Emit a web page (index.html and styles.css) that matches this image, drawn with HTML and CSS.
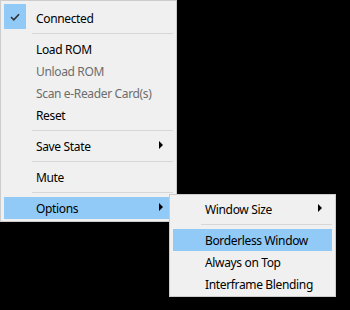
FILE: index.html
```html
<!DOCTYPE html>
<html lang="en">
<head>
  <meta charset="UTF-8">
  <title>Context Menu</title>
  <link rel="stylesheet" href="styles.css">
</head>
<body>
  <div class="menu main-menu">
    <div class="item checked">
      <span class="check">
        <svg width="10" height="8" viewBox="0 0 10 8"><path d="M1 4 L3.8 6.8 L9 1.2" fill="none" stroke="#333" stroke-width="1.6"/></svg>
      </span>
      <span class="label">Connected</span>
    </div>
    <div class="sep"></div>
    <div class="item"><span class="label">Load ROM</span></div>
    <div class="item disabled"><span class="label">Unload ROM</span></div>
    <div class="item disabled"><span class="label">Scan e-Reader Card(s)</span></div>
    <div class="item"><span class="label">Reset</span></div>
    <div class="sep"></div>
    <div class="item"><span class="label">Save State</span><span class="arrow"></span></div>
    <div class="sep"></div>
    <div class="item"><span class="label">Mute</span></div>
    <div class="sep"></div>
    <div class="item active"><span class="label">Options</span><span class="arrow"></span></div>
  </div>

  <div class="menu sub-menu">
    <div class="item"><span class="label">Window Size</span><span class="arrow"></span></div>
    <div class="sep"></div>
    <div class="item active"><span class="label">Borderless Window</span></div>
    <div class="item"><span class="label">Always on Top</span></div>
    <div class="item"><span class="label">Interframe Blending</span></div>
  </div>
</body>
</html>
```

FILE: styles.css
```css
body {
  background: #000;
  margin: 0;
  font-family: 'Segoe UI', 'Noto Sans', sans-serif;
  font-size: 12px;
  color: #000;
}

.menu {
  background: #f0f0f0;
  border: 1px solid #cccccc;
  box-sizing: border-box;
}

.main-menu {
  width: 177px;
  padding: 3px 3px 2px 3px;
}

.sub-menu {
  position: absolute;
  left: 169px;
  top: 194px;
  width: 167px;
  padding: 3px 3px 1px 3px;
}

.item {
  display: flex;
  align-items: center;
  height: 22px;
  padding-left: 32px;
  padding-right: 10px;
  position: relative;
}

.item .label {
  flex: 1;
  letter-spacing: -0.35px;
  padding-top: 1px;
}

.item.checked {
  height: 25px;
}

.item.checked .label {
  padding-top: 3px;
}

.check {
  position: absolute;
  left: 0;
  top: 0;
  width: 22px;
  height: 25px;
  background: #91c9f7;
  display: flex;
  align-items: center;
  justify-content: center;
}

.item.active {
  background: #91c9f7;
}

.item.disabled {
  color: #6d6d6d;
}

.arrow {
  width: 0;
  height: 0;
  border-top: 4px solid transparent;
  border-bottom: 4px solid transparent;
  border-left: 4px solid #000;
  margin-top: -2px;
}

.sep {
  height: 1px;
  background: #d7d7d7;
  margin: 4px 0 4px 28px;
}
```
